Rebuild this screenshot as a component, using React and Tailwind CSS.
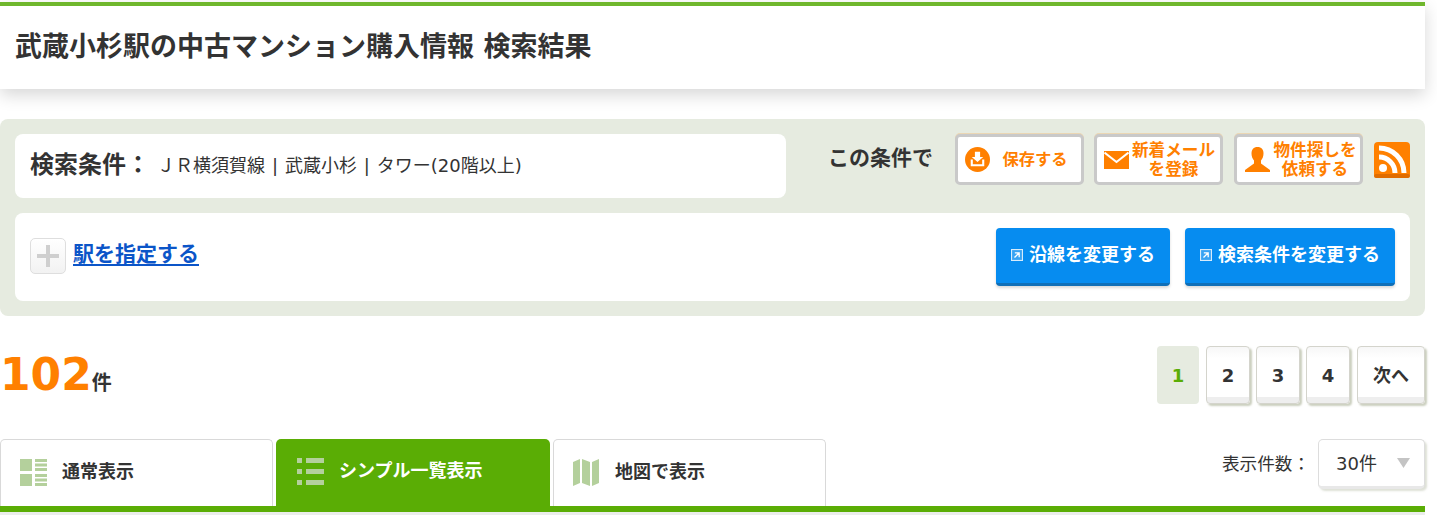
import React from "react";

const jp = "font-['DejaVu_Sans','Noto_Sans_CJK_JP',sans-serif]";
const num = "font-['DejaVu_Sans','Noto_Sans_CJK_JP',sans-serif]";

function SaveIcon() {
  return (
    <svg width="25" height="25" viewBox="0 0 24 24" className="shrink-0">
      <circle cx="12" cy="12" r="12" fill="#ff8000" />
      <path d="M9.5 4.5h5v5h3L12 14.5 6.5 9.5h3z" fill="#fff" />
      <path d="M5.5 12v6.5h13V12h-2v4.5h-9V12z" fill="#fff" />
    </svg>
  );
}
function MailIcon() {
  return (
    <svg width="25" height="18" viewBox="0 0 25 18" className="shrink-0">
      <rect width="25" height="18" fill="#ff8000" />
      <path d="M0.5 1.5L12.5 11L24.5 1.5" fill="none" stroke="#fff" strokeWidth="2" />
    </svg>
  );
}
function PersonIcon() {
  return (
    <svg width="25" height="25" viewBox="0 0 25 25" className="shrink-0">
      <path d="M12.500 0C8.500 0 6.500 2.500 6.500 6.500c0 3 1 5 2.500 7v3L0 23v2h25v-2l-9-6.500v-3c1.500-2 2.500-4 2.500-7C18.500 2.500 16.500 0 12.500 0z" fill="#ff8000" />
    </svg>
  );
}
function RssIcon() {
  return (
    <svg width="36" height="36" viewBox="0 0 36 36" className="shrink-0 self-start mt-[8px]">
      <rect width="36" height="36" rx="4" fill="#ff8000" />
      <rect y="32" width="36" height="4" rx="2" fill="#e06c00" />
      <circle cx="9" cy="26" r="4" fill="#fff" />
      <path d="M5 15a16 16 0 0 1 16 16" fill="none" stroke="#fff" strokeWidth="5" />
      <path d="M5 6a25 25 0 0 1 25 25" fill="none" stroke="#fff" strokeWidth="5" />
    </svg>
  );
}
function ExtIcon() {
  return (
    <svg width="12" height="12" viewBox="0 0 11 11" className="shrink-0">
      <rect x="0.5" y="0.5" width="10" height="10" fill="#fff" fillOpacity="0.2" stroke="#d6ebfb" />
      <path d="M3.500 3.500h4v4M7.500 3.500L3.200 7.800" fill="none" stroke="#fff" strokeWidth="1.200" />
    </svg>
  );
}
function NormalIcon() {
  return (
    <svg width="27" height="27" viewBox="0 0 27 27" className="shrink-0">
      <g fill="#b4d09c">
        <rect width="12" height="12" />
        <rect y="15" width="12" height="12" />
        <rect x="15" width="12" height="3" />
        <rect x="15" y="4.500" width="12" height="3" />
        <rect x="15" y="9" width="12" height="3" />
        <rect x="15" y="15" width="12" height="3" />
        <rect x="15" y="19.500" width="12" height="3" />
        <rect x="15" y="24" width="12" height="3" />
      </g>
    </svg>
  );
}
function ListIcon() {
  return (
    <svg width="27" height="27" viewBox="0 0 27 27" className="shrink-0">
      <g fill="#b4d09c">
        <rect width="5" height="5" />
        <rect y="11" width="5" height="5" />
        <rect y="22" width="5" height="5" />
        <rect x="9" width="18" height="5" />
        <rect x="9" y="11" width="18" height="5" />
        <rect x="9" y="22" width="18" height="5" />
      </g>
    </svg>
  );
}
function MapIcon() {
  return (
    <span className="w-[27px] shrink-0">
      <svg width="26" height="27" viewBox="0 0 26 27" className="block">
        <path d="M0 3l7-3v24l-7 3zM9 0l8 3v24l-8-3zM19 3l7-3v24l-7 3z" fill="#b4d09c" />
      </svg>
    </span>
  );
}

function SaveButton({ icon, className, children }) {
  return (
    <a className={`w-[129px] h-[51px] flex items-center justify-center rounded-[5px] border-[3px] border-[#c9c9c9] bg-white text-[#ff8000] leading-[19px] font-bold text-center shadow-[0_-1px_0_rgba(255,128,0,0.2)] ${className}`}>
      {icon}
      <span>{children}</span>
    </a>
  );
}

function BlueButton({ width, children }) {
  return (
    <a className={`${width} h-[58px] flex items-center justify-center gap-[6px] pb-[2px] rounded-[4px] bg-[#068cf0] border-b-[3px] border-[#0f6fb8] shadow-[0_2px_3px_rgba(0,0,0,0.15)] text-white text-[18px] font-bold`}>
      <ExtIcon />
      {children}
    </a>
  );
}

function Page({ children, width = "w-[44px]" }) {
  return (
    <a className={`${width} h-[58px] flex items-center justify-center rounded-[4px] border border-[#d4d4cc] bg-[linear-gradient(to_bottom,#f7f7f7,#ffffff_20%,#ffffff_90%,#eeeeee_90%)] shadow-[2px_2px_2px_rgba(190,195,175,0.8)] text-[#333] text-[18px] font-bold ${num}`}>
      {children}
    </a>
  );
}

function Tab({ icon, children, active }) {
  return (
    <a className={`h-[67px] flex items-start pt-[19px] gap-[15px] rounded-t-[5px] text-[18px] leading-[27px] font-bold ${active ? "w-[274px] pl-[21px] bg-[#5aad05] text-white" : "w-[273px] pl-[19px] bg-white border border-b-0 border-[#d9d9d9] text-[#333]"}`}>
      {icon}
      <span className="-mt-[1px]">{children}</span>
    </a>
  );
}

export default function App() {
  return (
    <div className={`w-[1437px] h-[515px] overflow-hidden bg-white pt-[2px] ${jp}`}>
      <div className="w-[1425px] text-[#333]">
        <header className="h-[87px] bg-white border-t-4 border-[#6fb72d] flex items-center pl-[15px] pb-[3px] shadow-[0_6px_16px_rgba(0,0,0,0.16)]">
          <h1 className="text-[27px] font-bold leading-none">武蔵小杉駅の中古マンション購入情報 検索結果</h1>
        </header>

        <section className="mt-[30px] h-[197px] bg-[#e6ebe0] rounded-[8px] p-[15px]">
          <div className="flex h-[64px]">
            <div className="w-[771px] h-[64px] bg-white rounded-[8px] flex items-center pl-[15px] pb-[2px]">
              <span className="text-[24px] font-bold">検索条件：</span>
              <span className="ml-[7px] text-[18px] font-normal [word-spacing:1.2px]">ＪＲ横須賀線 | 武蔵小杉 | タワー(20階以上)</span>
            </div>
            <span className="ml-[42px] w-[127px] mt-[9px] text-[21px] leading-[30px] font-bold">この条件で</span>
            <div className="flex items-start h-[51px]">
              <SaveButton className="text-[16.300px] gap-[12px] pr-[6px]" icon={<SaveIcon />}>保存する</SaveButton>
              <SaveButton className="ml-[10px] text-[16.600px] gap-[3px] pl-[2px]" icon={<MailIcon />}>新着メール<br />を登録</SaveButton>
              <SaveButton className="ml-[11px] text-[16.600px] gap-[4px] pl-[4px]" icon={<PersonIcon />}>物件探しを<br />依頼する</SaveButton>
            </div>
            <div className="ml-[11px]"><RssIcon /></div>
          </div>

          <div className="mt-[15px] h-[88px] bg-white rounded-[8px] flex items-center px-[15px]">
            <span className="w-[36px] h-[36px] mb-[2px] rounded-[5px] border border-[#dedede] bg-gradient-to-b from-white to-[#f2f2f2] flex items-center justify-center">
              <svg width="22" height="22" viewBox="0 0 22 22"><path d="M9 0h4v9h9v4h-9v9H9v-9H0V9h9z" fill="#cfcfcf" /></svg>
            </span>
            <a className="ml-[7px] mb-[6px] text-[21px] leading-[28px] font-bold text-[#0b55c8] underline underline-offset-[3px]">駅を指定する</a>
            <div className="ml-auto flex gap-[15px]">
              <BlueButton width="w-[174px]">沿線を変更する</BlueButton>
              <BlueButton width="w-[210px]">検索条件を変更する</BlueButton>
            </div>
          </div>
        </section>

        <div className="mt-[30px] h-[58px] flex justify-between">
          <div className="flex items-baseline pt-[1px] h-[58px]">
            <span className={`text-[44px] leading-[56px] font-bold text-[#ff8000] ${num}`}>102</span>
            <span className="text-[20px] font-bold">件</span>
          </div>
          <div className="flex gap-[6px]">
            <span className={`w-[42px] h-[58px] mr-[1px] flex items-center justify-center rounded-[4px] bg-[#e6ebe0] text-[#5aad05] text-[18px] font-bold ${num}`}>1</span>
            <Page>2</Page>
            <Page>3</Page>
            <Page>4</Page>
            <span className="ml-[1px]"><Page width="w-[68px]">次へ</Page></span>
          </div>
        </div>

        <div className="mt-[35px] h-[67px] flex gap-[3px] relative">
          <Tab icon={<NormalIcon />}>通常表示</Tab>
          <Tab active icon={<ListIcon />}>シンプル一覧表示</Tab>
          <Tab icon={<MapIcon />}>地図で表示</Tab>
          <div className="ml-auto flex h-[50px] items-center">
            <span className="text-[17.600px] font-normal">表示件数：</span>
            <div className="ml-[8px] w-[107px] h-[50px] flex items-center pl-[17px] rounded-[5px] border border-[#dddddd] border-b-[3px] border-b-[#e8e8e8] bg-white shadow-[2px_2px_2px_rgba(190,195,175,0.5)] text-[18px] font-normal">
              30件
              <svg width="13" height="10" viewBox="0 0 13 10" className="ml-[20px]"><path d="M0 0h13L6.500 10z" fill="#c4c4c4" /></svg>
            </div>
          </div>
        </div>
        <div className="h-[6px] bg-[#5aad05]" />
      </div>
      <div className="w-[1425px] h-[3px] bg-[#ebedeb]" />
    </div>
  );
}
